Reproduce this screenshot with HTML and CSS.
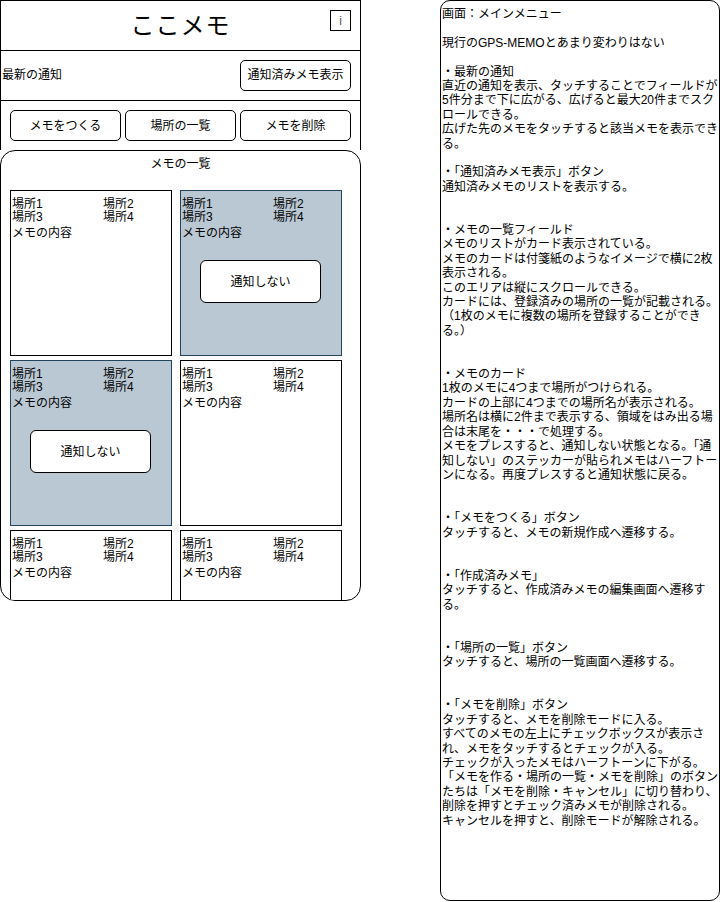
FILE: index.html
```html
<!DOCTYPE html>
<html lang="ja">
<head>
<meta charset="utf-8">
<title>ここメモ</title>
<link rel="stylesheet" href="styles.css">
</head>
<body>
<div class="page">
  <div class="phone">
    <div class="top">
      <header class="header">
        <span></span>
        <h1 class="title">ここメモ</h1>
        <span class="info">i</span>
      </header>
      <div class="notice">
        <span class="notice-label">最新の通知</span>
        <button class="btn btn-notice">通知済みメモ表示</button>
      </div>
      <div class="actions">
        <button class="btn btn-action">メモをつくる</button>
        <button class="btn btn-action">場所の一覧</button>
        <button class="btn btn-action">メモを削除</button>
      </div>
    </div>
    <section class="memo-list">
      <div class="memo-title">メモの一覧</div>
      <div class="cards">
        <div class="card">
          <div class="places"><span>場所1</span><span>場所2</span><span>場所3</span><span>場所4</span></div>
          <div class="content">メモの内容</div>
        </div>
        <div class="card muted">
          <div class="places"><span>場所1</span><span>場所2</span><span>場所3</span><span>場所4</span></div>
          <div class="content">メモの内容</div>
          <div class="sticker">通知しない</div>
        </div>
        <div class="card muted">
          <div class="places"><span>場所1</span><span>場所2</span><span>場所3</span><span>場所4</span></div>
          <div class="content">メモの内容</div>
          <div class="sticker">通知しない</div>
        </div>
        <div class="card">
          <div class="places"><span>場所1</span><span>場所2</span><span>場所3</span><span>場所4</span></div>
          <div class="content">メモの内容</div>
        </div>
        <div class="card">
          <div class="places"><span>場所1</span><span>場所2</span><span>場所3</span><span>場所4</span></div>
          <div class="content">メモの内容</div>
        </div>
        <div class="card">
          <div class="places"><span>場所1</span><span>場所2</span><span>場所3</span><span>場所4</span></div>
          <div class="content">メモの内容</div>
        </div>
      </div>
    </section>
  </div>

  <aside class="note">
    <p>画面：メインメニュー</p>
    <p class="gap1">現行のGPS-MEMOとあまり変わりはない</p>
    <p class="gap1">・最新の通知<br>直近の通知を表示、タッチすることでフィールドが5件分まで下に広がる、広げると最大20件までスクロールできる。<br>広げた先のメモをタッチすると該当メモを表示できる。</p>
    <p class="gap1">・「通知済みメモ表示」ボタン<br>通知済みメモのリストを表示する。</p>
    <p class="gap2">・メモの一覧フィールド<br>メモのリストがカード表示されている。<br>メモのカードは付箋紙のようなイメージで横に2枚表示される。<br>このエリアは縦にスクロールできる。<br>カードには、登録済みの場所の一覧が記載される。（1枚のメモに複数の場所を登録することができる。）</p>
    <p class="gap2">・メモのカード<br>1枚のメモに4つまで場所がつけられる。<br>カードの上部に4つまでの場所名が表示される。<br>場所名は横に2件まで表示する、領域をはみ出る場合は末尾を・・・で処理する。<br>メモをプレスすると、通知しない状態となる。「通知しない」のステッカーが貼られメモはハーフトーンになる。再度プレスすると通知状態に戻る。</p>
    <p class="gap2">・「メモをつくる」ボタン<br>タッチすると、メモの新規作成へ遷移する。</p>
    <p class="gap2">・「作成済みメモ」<br>タッチすると、作成済みメモの編集画面へ遷移する。</p>
    <p class="gap2">・「場所の一覧」ボタン<br>タッチすると、場所の一覧画面へ遷移する。</p>
    <p class="gap2">・「メモを削除」ボタン<br>タッチすると、メモを削除モードに入る。<br>すべてのメモの左上にチェックボックスが表示され、メモをタッチするとチェックが入る。<br>チェックが入ったメモはハーフトーンに下がる。<br>「メモを作る・場所の一覧・メモを削除」のボタンたちは「メモを削除・キャンセル」に切り替わり、<br>削除を押すとチェック済みメモが削除される。<br>キャンセルを押すと、削除モードが解除される。</p>
  </aside>
</div>
</body>
</html>
```

FILE: styles.css
```css
* {
  box-sizing: border-box;
}

html, body {
  margin: 0;
  padding: 0;
  background: #ffffff;
}

body {
  font-family: "Liberation Sans", "Noto Sans CJK JP", sans-serif;
  font-size: 12px;
  color: #000000;
}

.page {
  display: flex;
  align-items: flex-start;
  gap: 79px;
}

/* ---------- phone mockup ---------- */
.phone {
  width: 361px;
  display: flex;
  flex-direction: column;
}

.top {
  border: 1px solid #000;
  border-bottom: none;
}

.header {
  height: 50px;
  border-bottom: 1px solid #000;
  display: grid;
  grid-template-columns: 1fr auto 1fr;
  align-items: center;
}

.title {
  margin: 0;
  font-size: 24px;
  font-weight: normal;
  line-height: 28px;
  letter-spacing: 1px;
}

.info {
  justify-self: end;
  align-self: start;
  margin-top: 9px;
  margin-right: 9px;
  width: 21px;
  height: 21px;
  border: 1px solid #000;
  display: flex;
  align-items: center;
  justify-content: center;
  color: #555;
  font-size: 12px;
  line-height: 1;
}

.notice {
  height: 50px;
  border-bottom: 1px solid #000;
  display: flex;
  align-items: center;
  justify-content: space-between;
  padding: 0 9px 1px 1px;
}

.notice-label {
  line-height: 14px;
}

.btn {
  font-family: inherit;
  font-size: 12px;
  color: #000;
  background: #fff;
  border: 1px solid #000;
  border-radius: 5px;
  padding: 0;
  margin: 0;
  height: 31px;
  width: 111px;
  line-height: 14px;
}

.actions {
  height: 49px;
  display: flex;
  gap: 4px;
  padding: 9px 9px 0 9px;
}

/* ---------- memo list ---------- */
.memo-list {
  height: 451px;
  border: 1px solid #000;
  border-radius: 15px;
  overflow: hidden;
  padding-top: 6px;
}

.memo-title {
  text-align: center;
  line-height: 14px;
  height: 14px;
}

.cards {
  margin-top: 19px;
  padding-left: 9px;
  display: grid;
  grid-template-columns: 162px 162px;
  column-gap: 8px;
  row-gap: 4px;
}

.card {
  height: 166px;
  border: 1px solid #000;
  background: #fff;
  padding: 7px 1px 0 1px;
}

.card.muted {
  background: #bac8d3;
  border-color: #23445d;
}

.places {
  display: grid;
  grid-template-columns: 91px auto;
  line-height: 13px;
}

.content {
  margin-top: 2px;
  line-height: 14px;
}

.sticker {
  margin: 20px 0 0 18px;
  width: 121px;
  height: 43px;
  border: 1px solid #000;
  border-radius: 6px;
  background: #fff;
  display: flex;
  align-items: center;
  justify-content: center;
  line-height: 14px;
}

/* ---------- description note ---------- */
.note {
  width: 280px;
  height: 901px;
  border: 1px solid #000;
  border-radius: 10px;
  padding: 6px 0 0 1px;
  line-height: 14.4px;
}

.note p {
  margin: 0;
}

.note .gap1 {
  margin-top: 14.4px;
}

.note .gap2 {
  margin-top: 28.8px;
}
```
